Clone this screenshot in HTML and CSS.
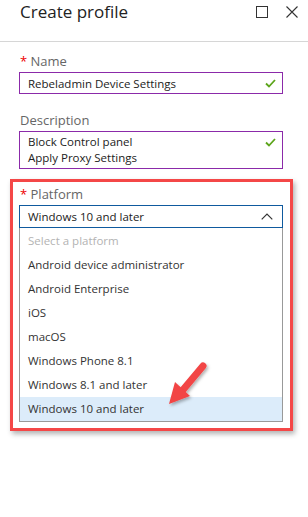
FILE: index.html
```html
<!DOCTYPE html>
<html lang="en">
<head>
  <meta charset="UTF-8" />
  <title>Create profile</title>
  <link rel="stylesheet" href="styles.css">
</head>
<body>

<div class="blade-header">
  <h1>Create profile</h1>
  <div class="blade-actions">
    <svg width="12" height="12" viewBox="0 0 12 12"><rect x="0.5" y="0.5" width="11" height="11" fill="none" stroke="#333" stroke-width="1"/></svg>
    <svg width="12" height="12" viewBox="0 0 12 12"><path d="M0.5 0.5 L11.5 11.5 M11.5 0.5 L0.5 11.5" stroke="#333" stroke-width="1.1"/></svg>
  </div>
</div>

<div class="blade-body">
  <div class="field">
    <label><span class="req">*</span> Name</label>
    <div class="input valid">
      <span>Rebeladmin Device Settings</span>
      <svg class="check" width="11" height="9" viewBox="0 0 11 9"><path d="M1 4.5 L4 7.5 L10 1" fill="none" stroke="#5ca51b" stroke-width="1.8"/></svg>
    </div>
  </div>

  <div class="field last">
    <label>Description</label>
    <div class="input valid multi">
      <span>Block Control panel<br>Apply Proxy Settings</span>
      <svg class="check" width="11" height="9" viewBox="0 0 11 9"><path d="M1 4.5 L4 7.5 L10 1" fill="none" stroke="#5ca51b" stroke-width="1.8"/></svg>
    </div>
  </div>

  <div class="highlight">
    <label><span class="req">*</span> Platform</label>
    <div class="select">
      <span>Windows 10 and later</span>
      <svg width="12" height="7" viewBox="0 0 12 7"><path d="M0.7 6.3 L6 1 L11.3 6.3" fill="none" stroke="#333" stroke-width="1.2"/></svg>
    </div>
    <ul class="options">
      <li class="placeholder">Select a platform</li>
      <li>Android device administrator</li>
      <li>Android Enterprise</li>
      <li>iOS</li>
      <li>macOS</li>
      <li>Windows Phone 8.1</li>
      <li>Windows 8.1 and later</li>
      <li class="selected">Windows 10 and later</li>
    </ul>
  </div>
</div>

<svg class="arrow" width="60" height="60" viewBox="0 0 60 60">
  <defs>
    <filter id="sh" x="-30%" y="-30%" width="160%" height="160%">
      <feDropShadow dx="1.5" dy="2" stdDeviation="1.5" flood-color="#000" flood-opacity="0.3"/>
    </filter>
  </defs>
  <g filter="url(#sh)">
    <path d="M41 10 L20 35" stroke="#f24444" stroke-width="7" stroke-linecap="round"/>
    <path d="M7 48 L13 26 L28 40 Z" fill="#f24444"/>
  </g>
</svg>

</body>
</html>
```

FILE: styles.css
```css
* { margin: 0; padding: 0; box-sizing: border-box; }
body, html { height: 100%; background: #fff; }
body {
  font-family: 'Open Sans', 'Noto Sans', sans-serif;
  font-size: 12px;
  color: #333;
  position: relative;
}

.blade-header {
  height: 42px;
  display: flex;
  justify-content: space-between;
  align-items: flex-start;
  padding: 0 10px 0 20px;
  border-bottom: 1px solid #d6d6d6;
}
.blade-header h1 {
  font-weight: 400;
  font-size: 17px;
  line-height: 24px;
  color: #222;
}
.blade-actions {
  display: flex;
  gap: 18px;
  padding-top: 6px;
}

.blade-body {
  padding: 11px 0 0 0;
}

.field {
  margin: 0 25px 18px 19px;
}
.field.last { margin-bottom: 10px; }

label {
  display: block;
  font-size: 13px;
  line-height: 16px;
  color: #666;
  margin-bottom: 3px;
  padding-left: 1px;
}
.req { color: #e00; }

.input {
  display: flex;
  justify-content: space-between;
  align-items: center;
  border: 1px solid #8b2aa9;
  height: 22px;
  padding: 0 6px 0 8px;
  font-size: 11.5px;
  color: #222;
}
.input.multi {
  height: 38px;
  align-items: flex-start;
  line-height: 16px;
  padding-top: 2px;
}
.input.multi .check { margin-top: 4px; }

.highlight {
  margin: 0 15px 0 10px;
  border: 3px solid #f44747;
  padding: 4px 7px 6px 6px;
  box-shadow: 2px 3px 5px rgba(0,0,0,0.3);
}

.select {
  display: flex;
  justify-content: space-between;
  align-items: center;
  height: 23px;
  border: 1px solid #0f5a9e;
  padding: 0 9px 0 8px;
  font-size: 11.5px;
  color: #222;
}

.options {
  list-style: none;
  border: 1px solid #999;
  border-top: none;
  padding-top: 1px;
}
.options li {
  height: 24px;
  line-height: 24px;
  padding-left: 8px;
  font-size: 11.5px;
  color: #333;
}
.options li.placeholder { color: #b3b3b3; }
.options li.selected { background: #dcecfa; }

.arrow {
  position: absolute;
  left: 162px;
  top: 356px;
}
```
